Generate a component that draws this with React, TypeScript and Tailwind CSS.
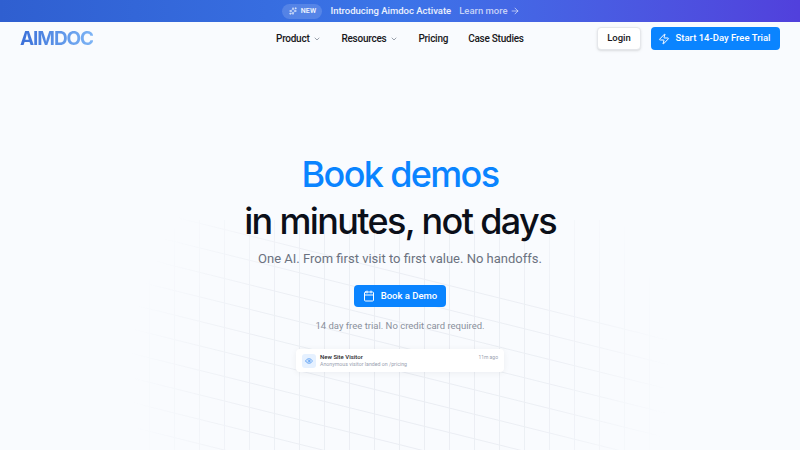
import { ArrowRight, Calendar, ChevronDown, Eye, Sparkles, Zap } from 'lucide-react';

const verticals = Array.from({ length: 21 }, (_, i) => 149.5 + i * 25);
const diagonals = Array.from({ length: 14 }, (_, i) => 206 + i * 24.5);

function GridBackdrop() {
  return (
    <svg className="pointer-events-none absolute inset-0 h-full w-full" viewBox="0 0 800 450" fill="none">
      <defs>
        <radialGradient id="fade" cx="400" cy="370" r="270" gradientUnits="userSpaceOnUse">
          <stop offset="0" stopColor="white" />
          <stop offset="0.55" stopColor="white" stopOpacity="0.8" />
          <stop offset="1" stopColor="white" stopOpacity="0" />
        </radialGradient>
        <mask id="grid-mask">
          <rect width="800" height="450" fill="url(#fade)" />
        </mask>
      </defs>
      <g mask="url(#grid-mask)" stroke="#e9ecf2" strokeWidth="1">
        {verticals.map((x) => (
          <line key={x} x1={x} y1="220" x2={x} y2="450" />
        ))}
        {diagonals.map((y) => (
          <line key={y} x1="130" y1={y} x2="700" y2={y + 142} />
        ))}
      </g>
    </svg>
  );
}

function NavLink({ label, menu }: { label: string; menu?: boolean }) {
  return (
    <a className="flex items-center gap-1 whitespace-nowrap text-[10px] font-medium tracking-[-0.25px] text-[#18181b]">
      {label}
      {menu && <ChevronDown className="h-2 w-2 text-gray-500" strokeWidth={2} />}
    </a>
  );
}

export default function App() {
  return (
    <div className="relative h-[450px] w-[800px] overflow-hidden bg-[#f9fbfe] font-['Roboto',sans-serif]">
      <GridBackdrop />

      {/* Announcement */}
      <div className="relative flex h-[22px] items-center justify-center bg-gradient-to-r from-[#2f5fd0] via-[#3b74e8] to-[#5140dc] pl-[2px] text-[9.5px] font-medium">
        <span className="flex h-[15px] w-[40px] items-center justify-center gap-1 rounded-full bg-white/15 text-[7px] font-semibold tracking-wide text-white/90">
          <Sparkles className="h-2 w-2" />
          NEW
        </span>
        <span className="ml-2 whitespace-nowrap text-white/90">Introducing Aimdoc Activate</span>
        <span className="ml-2 flex items-center gap-[2px] whitespace-nowrap text-white/70">
          Learn more
          <ArrowRight className="h-2.5 w-2.5" />
        </span>
      </div>

      {/* Nav */}
      <nav className="relative flex h-[33px] items-center pl-5 pr-5">
        <span className="mt-[1px] w-[256px] shrink-0 font-['Inter',sans-serif] text-[19px] font-bold tracking-[-1.1px]">
          <span className="bg-gradient-to-r from-[#3b6fd8] to-[#7db4f5] bg-clip-text text-transparent">AIMDOC</span>
        </span>
        <div className="flex items-center gap-[20px]">
          <NavLink label="Product" menu />
          <NavLink label="Resources" menu />
          <NavLink label="Pricing" />
          <NavLink label="Case Studies" />
        </div>
        <div className="ml-auto flex items-center gap-[10px]">
          <button className="h-[23px] w-[44px] rounded-[4px] border border-gray-200 bg-white text-[9.5px] font-medium text-[#18181b] shadow-sm">
            Login
          </button>
          <button className="flex h-[23px] w-[129px] items-center justify-center gap-1.5 whitespace-nowrap rounded-[4px] bg-[#0a84ff] pr-[3px] text-[9.5px] font-medium text-white">
            <Zap className="h-3 w-3" />
            Start 14-Day Free Trial
          </button>
        </div>
      </nav>

      {/* Hero */}
      <main className="relative flex flex-col items-center pt-[96px]">
        <h1 className="whitespace-nowrap text-center font-['Inter',sans-serif] text-[36px] leading-[47px] font-medium tracking-[-1.65px]">
          <span className="block text-[#0a84ff]">Book demos</span>
          <span className="block text-[#0b0f19]">in minutes, not days</span>
        </h1>
        <p className="mt-[4px] whitespace-nowrap text-[13px] leading-5 text-[#6b7280]">One AI. From first visit to first value. No handoffs.</p>
        <button className="mt-[16px] flex h-[22px] w-[92px] items-center justify-center gap-1.5 whitespace-nowrap rounded-[4px] bg-[#0a84ff] text-[9.5px] font-medium text-white">
          <Calendar className="h-3 w-3" />
          Book a Demo
        </button>
        <p className="mt-[12px] whitespace-nowrap text-[9.5px] leading-[14px] text-[#8a909c]">14 day free trial. No credit card required.</p>
        <div className="mt-[16px] flex h-[23px] w-[208px] items-center gap-1 rounded-[4px] bg-white pl-1.5 pr-1.5 shadow-[0_1px_6px_rgba(15,23,42,0.06)]">
          <span className="flex h-[14px] w-[14px] shrink-0 items-center justify-center rounded-[3px] bg-[#e6f1ff] text-[#3b8df0]">
            <Eye className="h-2 w-2" />
          </span>
          <div className="min-w-0 flex-1">
            <div className="flex items-center justify-between">
              <span className="text-[6px] leading-[8px] font-medium text-[#27272a]">New Site Visitor</span>
              <span className="text-[5px] leading-[8px] text-gray-400">11m ago</span>
            </div>
            <p className="text-[5.25px] leading-[7px] text-gray-400">Anonymous visitor landed on /pricing</p>
          </div>
        </div>
      </main>
    </div>
  );
}
